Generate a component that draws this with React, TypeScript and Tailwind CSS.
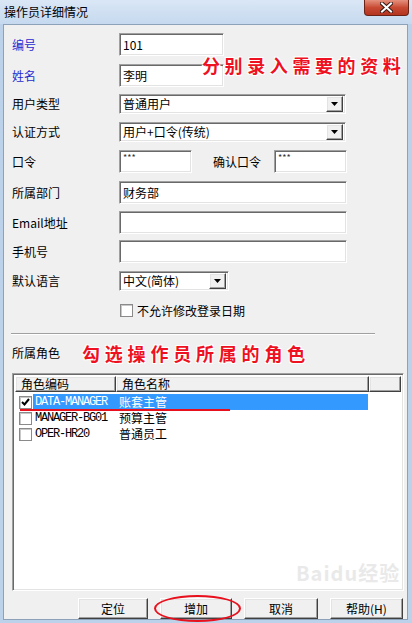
const ui = { fontFamily: '"Noto Sans CJK SC", "Liberation Sans", sans-serif' };
const mono = { fontFamily: '"Liberation Mono", "Noto Sans CJK SC", monospace' };
const note = { fontFamily: '"Noto Sans CJK SC", serif', textShadow: "1px 1px 0 #fff, -1px -1px 0 #fff, 1px -1px 0 #fff, -1px 1px 0 #fff" };

const sunken =
    "border border-t-[#a0a0a0] border-l-[#a0a0a0] border-b-white border-r-white shadow-[inset_1px_1px_0_#696969,inset_-1px_-1px_0_#e3e3e3] bg-white";
const raised =
    "border border-t-white border-l-white border-b-[#404040] border-r-[#404040] shadow-[inset_-1px_-1px_0_#a0a0a0,inset_1px_1px_0_#e3e3e3] bg-[#f0f0f0]";

const Label = ({ text, blue }: { text: string; blue?: boolean }) => (
    <div className={`w-[115px] shrink-0 pl-2 text-[12px] ${blue ? "text-[#2a2ad0]" : "text-black"}`}>{text}</div>
);

const TextBox = ({ w, value, small }: { w: number; value?: string; small?: boolean }) => (
    <div className={`${sunken} h-[23px] flex ${small ? "items-start pt-[2px]" : "items-center"} px-[3px]`} style={{ width: w }}>
        <span className={small ? "text-[9px] leading-[9px] text-[#333]" : "text-[12px] text-black"}>{value}</span>
    </div>
);

const Combo = ({ w, value }: { w: number; value: string }) => (
    <div className={`${sunken} h-[20px] flex items-center`} style={{ width: w }}>
        <span className="flex-1 px-[3px] text-[12px] text-black">{value}</span>
        <div className={`${raised} w-[17px] h-[16px] mr-[2px] flex items-center justify-center`}>
            <svg width="7" height="4" viewBox="0 0 7 4"><path d="M0 0h7L3.5 4z" fill="#000" /></svg>
        </div>
    </div>
);

const Check = ({ on }: { on?: boolean }) => (
    <div className="w-[13px] h-[13px] shrink-0 border border-[#8a8a8a] bg-white shadow-[inset_1px_1px_0_#c8c8c8] flex items-center justify-center">
        {on && (
            <svg width="9" height="8" viewBox="0 0 9 8"><path d="M1 4l2.5 2.5L8 1" stroke="#000" strokeWidth="2" fill="none" /></svg>
        )}
    </div>
);

const Button = ({ text, w }: { text: string; w: number }) => (
    <div className={`${raised} h-[21px] flex items-center justify-center text-[12px] text-black`} style={{ width: w }}>
        {text}
    </div>
);

const roles = [
    { code: "DATA-MANAGER", name: "账套主管", on: true },
    { code: "MANAGER-BG01", name: "预算主管" },
    { code: "OPER-HR20", name: "普通员工" },
];

export default function App() {
    return (
        <div className="relative w-[412px] h-[623px] bg-[#bcd2ea] flex flex-col overflow-hidden" style={ui}>
            {/* title bar */}
            <div className="h-[24px] shrink-0 bg-gradient-to-b from-[#dae7f5] to-[#c5d9ef] flex items-start">
                <span className="ml-[4px] mt-[3px] text-[12px] text-black">操作员详细情况</span>
                <div className="ml-auto mr-[3px] w-[45px] h-[16px] rounded-b-[4px] border border-[#6b2217] border-t-0 bg-gradient-to-b from-[#e4907e] via-[#c84a33] to-[#b3341f] flex items-center justify-center">
                    <svg width="13" height="11" viewBox="0 0 13 11">
                        <path d="M2 1.5l9 8M11 1.5l-9 8" stroke="#3a1a14" strokeWidth="4" strokeLinecap="square" />
                        <path d="M2 1.5l9 8M11 1.5l-9 8" stroke="#fff" strokeWidth="2" strokeLinecap="square" />
                    </svg>
                </div>
            </div>

            {/* client area */}
            <div className="flex-1 ml-[3px] mr-[4px] mb-[5px] border border-[#8da2b8] bg-[#f0f0f0] flex flex-col">
                <div className="flex items-center mt-[8px]">
                    <Label text="编号" blue />
                    <TextBox w={105} value="101" />
                </div>
                <div className="flex items-center mt-[8px]">
                    <Label text="姓名" blue />
                    <TextBox w={105} value="李明" />
                </div>
                <div className="flex items-center mt-[7px]">
                    <Label text="用户类型" />
                    <Combo w={227} value="普通用户" />
                </div>
                <div className="flex items-center mt-[8px]">
                    <Label text="认证方式" />
                    <Combo w={227} value="用户+口令(传统)" />
                </div>
                <div className="flex items-center mt-[8px]">
                    <Label text="口令" />
                    <TextBox w={73} value="***" small />
                    <span className="ml-[21px] w-[61px] text-[12px] text-black">确认口令</span>
                    <TextBox w={73} value="***" small />
                </div>
                <div className="flex items-center mt-[8px]">
                    <Label text="所属部门" />
                    <TextBox w={228} value="财务部" />
                </div>
                <div className="flex items-center mt-[7px]">
                    <Label text="Email地址" />
                    <TextBox w={228} />
                </div>
                <div className="flex items-center mt-[6px]">
                    <Label text="手机号" />
                    <TextBox w={228} />
                </div>
                <div className="flex items-center mt-[8px]">
                    <Label text="默认语言" />
                    <Combo w={110} value="中文(简体)" />
                </div>
                <div className="flex items-center mt-[13px] pl-[116px] gap-[4px]">
                    <Check />
                    <span className="text-[12px] text-black leading-[13px]">不允许修改登录日期</span>
                </div>
                <div className="mt-[16px] ml-[7px] w-[364px] h-[2px] border-t border-[#a0a0a0] border-b-white border-b" />
                <div className="flex items-center mt-[8px] h-[20px]">
                    <span className="pl-2 w-[78px] text-[12px] text-black">所属角色</span>
                    <span className="text-[18px] font-bold tracking-[4.8px] text-[#ee1122]" style={note}>
                        勾选操作员所属的角色
                    </span>
                </div>

                {/* role list */}
                <div className={`${sunken} mt-[10px] ml-[8px] w-[392px] h-[218px] p-[2px] flex flex-col`}>
                    <div className="flex h-[16px] shrink-0">
                        <div className={`${raised} w-[101px] h-[16px] pl-[5px] text-[12px] leading-[14px] text-black`}>角色编码</div>
                        <div className={`${raised} w-[253px] h-[16px] pl-[5px] text-[12px] leading-[14px] text-black`}>角色名称</div>
                        <div className={`${raised} flex-1 h-[16px]`} />
                    </div>
                    <div className="flex flex-col mt-[2px]">
                        {roles.map((r) => (
                            <div key={r.code} className="flex items-center h-[16px] pl-[4px]">
                                <Check on={r.on} />
                                <div
                                    className={`flex items-center h-[16px] w-[335px] ml-[1px] ${r.on ? "bg-[#3399ff] text-white outline outline-1 outline-dotted outline-[#c87a30] -outline-offset-1" : "text-black"}`}
                                >
                                    <span className="w-[86px] pl-[2px] text-[12px] tracking-[-1.2px]" style={mono}>{r.code}</span>
                                    <span className="text-[12px]">{r.name}</span>
                                </div>
                            </div>
                        ))}
                    </div>
                </div>

                {/* buttons */}
                <div className="flex mt-[7px] ml-[74px] gap-[12px]">
                    <Button text="定位" w={70} />
                    <Button text="增加" w={72} />
                    <Button text="取消" w={74} />
                    <Button text="帮助(H)" w={73} />
                </div>
            </div>

            {/* annotations drawn over the dialog */}
            <span className="absolute left-[202px] top-[52px] text-[18px] font-bold tracking-[4.6px] text-[#ee1122]" style={note}>
                分别录入需要的资料
            </span>
            <div className="absolute left-[20px] top-[409px] w-[210px] h-[2px] bg-[#e8101c]" />
            <div className="absolute left-[154px] top-[595px] w-[87px] h-[27px] rounded-[50%] border-2 border-[#e8101c]" />
            <span className="absolute left-[296px] top-[558px] text-[20px] font-bold text-[#dcdcdc] opacity-60 tracking-[1px]">Baidu经验</span>
        </div>
    );
}
